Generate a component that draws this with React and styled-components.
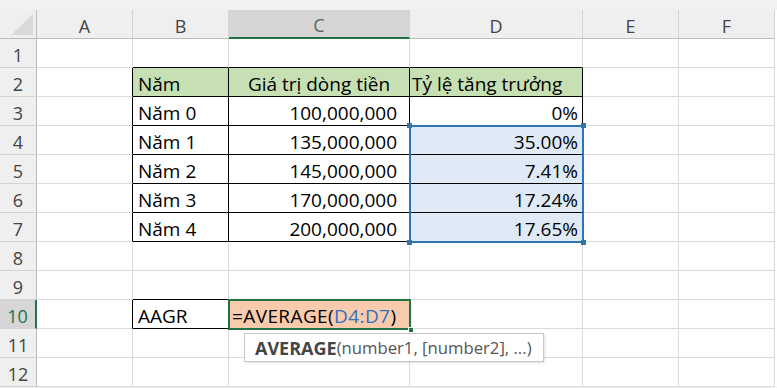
import styled, { createGlobalStyle } from 'styled-components'

const GlobalStyle = createGlobalStyle`
  html, body {
    margin: 0;
    padding: 0;
    background: #fff;
  }
  body {
    font-family: 'Open Sans', 'Liberation Sans', sans-serif;
  }
`

const EXCEL_GREEN = '#217346'
const SELECT_BLUE = '#2e75b6'
const GRID = '#dadada'
const HEAD_LINE = '#bcbcbc'

const COLUMNS = [
    { name: 'A', width: 96 },
    { name: 'B', width: 96 },
    { name: 'C', width: 181 },
    { name: 'D', width: 173 },
    { name: 'E', width: 96 },
    { name: 'F', width: 96 },
]
const ROW_COUNT = 12
const ACTIVE = { row: 10, col: 2 }

const HEAD_FILL = '#c6e0b4'
const RANGE_FILL = '#dfeaf6'

// formula being typed in the active cell, the range reference is coloured
const Formula = () => (
    <FormulaText>
        =AVERAGE(<Ref>D4:D7</Ref>)
    </FormulaText>
)

const cells = {
    B2: { value: 'Năm', fill: HEAD_FILL },
    C2: { value: 'Giá trị dòng tiền', fill: HEAD_FILL, align: 'center' },
    D2: { value: 'Tỷ lệ tăng trưởng', fill: HEAD_FILL, pad: 2 },
    B3: { value: 'Năm 0' },
    C3: { value: '100,000,000', align: 'right', pad: 12 },
    D3: { value: '0%', align: 'right' },
    B4: { value: 'Năm 1' },
    C4: { value: '135,000,000', align: 'right', pad: 12 },
    D4: { value: '35.00%', align: 'right', fill: RANGE_FILL },
    B5: { value: 'Năm 2' },
    C5: { value: '145,000,000', align: 'right', pad: 12 },
    D5: { value: '7.41%', align: 'right', fill: RANGE_FILL },
    B6: { value: 'Năm 3' },
    C6: { value: '170,000,000', align: 'right', pad: 12 },
    D6: { value: '17.24%', align: 'right', fill: RANGE_FILL },
    B7: { value: 'Năm 4' },
    C7: { value: '200,000,000', align: 'right', pad: 12 },
    D7: { value: '17.65%', align: 'right', fill: RANGE_FILL },
    B10: { value: 'AAGR' },
    C10: { formula: true, fill: '#f8cbad', pad: 3 },
}

// ranges drawn with thin black borders: [col from, row from, col to, row to]
const boxed = [
    [1, 2, 3, 7],
    [1, 10, 1, 10],
]

const isBoxed = (r, c) =>
    boxed.some(([c1, r1, c2, r2]) => c >= c1 && c <= c2 && r >= r1 && r <= r2)

const App = () => {
    const rows = Array.from({ length: ROW_COUNT }, (_, i) => i + 1)

    return (
        <>
            <GlobalStyle />
            <Sheet>
                <Grid>
                    <Corner>
                        <svg width='22' height='21' viewBox='0 0 22 21'>
                            <polygon points='22,0 22,21 0,21' fill='#d9d9d9' />
                        </svg>
                    </Corner>
                    {COLUMNS.map((col, c) => (
                        <ColHead key={col.name} $col={c + 2} $active={c === ACTIVE.col}>
                            {col.name}
                        </ColHead>
                    ))}

                    {rows.map(r => (
                        <RowHead key={`h${r}`} $row={r + 1} $active={r === ACTIVE.row}>
                            {r}
                        </RowHead>
                    ))}

                    {rows.map(r =>
                        COLUMNS.map((col, c) => {
                            const cell = cells[`${col.name}${r}`] || {}
                            const black = isBoxed(r, c)
                            return (
                                <Cell
                                    key={`${col.name}${r}`}
                                    $row={r + 1}
                                    $col={c + 2}
                                    $fill={cell.fill}
                                    $align={cell.align}
                                    $pad={cell.pad}
                                    $right={black || isBoxed(r, c + 1) ? '#000' : GRID}
                                    $bottom={black || isBoxed(r + 1, c) ? '#000' : GRID}
                                >
                                    {cell.formula ? <Formula /> : cell.value}
                                </Cell>
                            )
                        })
                    )}

                    <Frame $rows='5 / 9' $cols='5 / 6' $color={SELECT_BLUE}>
                        <Handle $pos='tl' />
                        <Handle $pos='tr' />
                        <Handle $pos='bl' />
                        <Handle $pos='br' />
                    </Frame>

                    <Frame $rows='11 / 12' $cols='4 / 5' $color={EXCEL_GREEN}>
                        <FillHandle />
                        <Tooltip>
                            <b>AVERAGE</b>(number1, [number2], ...)
                        </Tooltip>
                    </Frame>
                </Grid>
            </Sheet>
        </>
    )
}

const Sheet = styled.div`
    padding-top: 10px;
    background: #f1f1f1;
    height: 388px;
    box-sizing: border-box;
    overflow: hidden;
`

const Grid = styled.div`
    display: grid;
    grid-template-columns: 37px ${COLUMNS.map(c => `${c.width}px`).join(' ')} 1fr;
    grid-template-rows: repeat(${ROW_COUNT + 1}, 29px);
    background: #fff;

    & > * {
        box-sizing: border-box;
    }
`

const Corner = styled.div`
    grid-row: 1;
    grid-column: 1;
    display: flex;
    align-items: flex-end;
    justify-content: flex-end;
    padding: 0 3px 3px 0;
    background: #efefef;
    border-right: 1px solid ${HEAD_LINE};
    border-bottom: 1px solid ${HEAD_LINE};
`

const ColHead = styled.div`
    grid-row: 1;
    grid-column: ${p => p.$col};
    display: flex;
    align-items: center;
    justify-content: center;
    padding-top: ${p => (p.$active ? 3 : 4)}px;
    background: ${p => (p.$active ? '#d6d6d6' : '#efefef')};
    border-right: 1px solid #d4d4d4;
    border-bottom: ${p => (p.$active ? `2px solid ${EXCEL_GREEN}` : `1px solid ${HEAD_LINE}`)};
    color: ${p => (p.$active ? '#4e6d5b' : '#444')};
    font-size: 18px;
`

const RowHead = styled.div`
    grid-row: ${p => p.$row};
    grid-column: 1;
    display: flex;
    align-items: center;
    justify-content: center;
    padding-top: 3px;
    background: ${p => (p.$active ? '#d6d6d6' : '#efefef')};
    border-right: ${p => (p.$active ? `2px solid ${EXCEL_GREEN}` : `1px solid ${HEAD_LINE}`)};
    border-bottom: 1px solid #d4d4d4;
    color: ${p => (p.$active ? EXCEL_GREEN : '#444')};
    font-size: 18px;
`

const Cell = styled.div`
    grid-row: ${p => p.$row};
    grid-column: ${p => p.$col};
    display: flex;
    align-items: center;
    justify-content: ${p =>
        p.$align === 'right' ? 'flex-end' : p.$align === 'center' ? 'center' : 'flex-start'};
    padding: 3px ${p => (p.$align === 'right' ? p.$pad ?? 4 : 0)}px 0
        ${p => (p.$align === 'right' || p.$align === 'center' ? 0 : p.$pad ?? 5)}px;
    background: ${p => p.$fill || '#fff'};
    border-right: 1px solid ${p => p.$right};
    border-bottom: 1px solid ${p => p.$bottom};
    color: #000;
    font-size: 19px;
    white-space: nowrap;
    min-width: 0;
`

const FormulaText = styled.span`
    letter-spacing: 0.4px;
`

const Ref = styled.span`
    color: #2f72bd;
`

const Frame = styled.div`
    grid-row: ${p => p.$rows};
    grid-column: ${p => p.$cols};
    position: relative;
    margin: -1px;
    border: 2px solid ${p => p.$color};
    pointer-events: none;
    z-index: 2;
`

const Handle = styled.span`
    position: absolute;
    width: 5px;
    height: 5px;
    background: ${SELECT_BLUE};
    ${p => (p.$pos[0] === 't' ? 'top: -4px;' : 'bottom: -4px;')}
    ${p => (p.$pos[1] === 'l' ? 'left: -4px;' : 'right: -4px;')}
`

const FillHandle = styled.span`
    position: absolute;
    right: -5px;
    bottom: -5px;
    width: 6px;
    height: 6px;
    background: ${EXCEL_GREEN};
    border: 1px solid #fff;
    box-sizing: border-box;
`

const Tooltip = styled.div`
    position: absolute;
    top: calc(100% + 5px);
    left: 14px;
    height: 29px;
    box-sizing: border-box;
    display: flex;
    align-items: center;
    padding: 0 11px 0 10px;
    background: #fff;
    border: 1px solid #c6c6c6;
    box-shadow: 1px 1px 2px rgba(0, 0, 0, 0.12);
    color: #555;
    font-size: 16.7px;
    white-space: nowrap;
    z-index: 3;

    b {
        color: #454545;
        font-weight: 700;
        font-size: 18px;
    }
`

export default App
